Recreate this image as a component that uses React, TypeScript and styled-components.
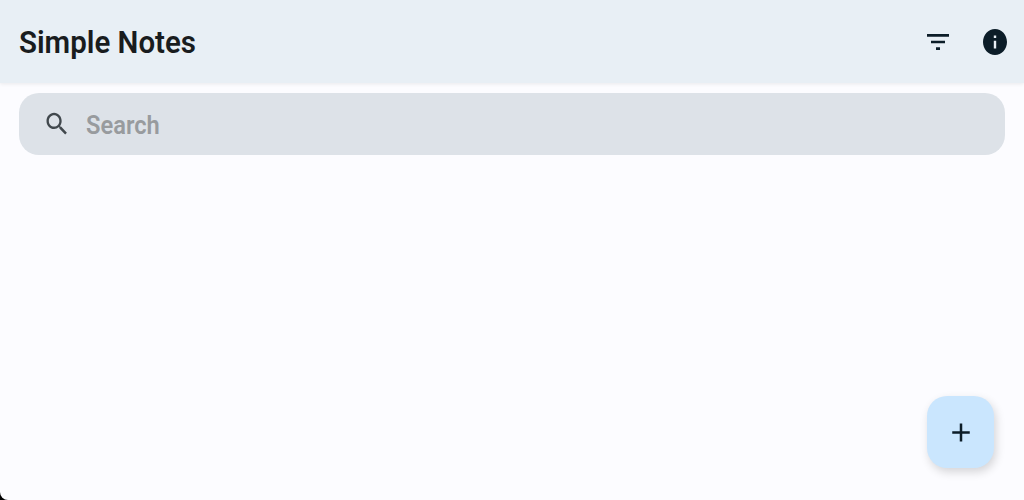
import React from 'react';
import styled, { createGlobalStyle } from 'styled-components';

const GlobalStyle = createGlobalStyle`
  html, body {
    margin: 0;
    padding: 0;
    height: 100%;
    background: #000;
    overflow: hidden;
  }
  #root {
    height: 100%;
  }
`;

const Screen = styled.div`
  position: relative;
  width: 1024px;
  height: 500px;
  background: #fcfcff;
  border-radius: 0 0 0 8px;
  overflow: hidden;
  font-family: Roboto, "Liberation Sans", sans-serif;
  display: flex;
  flex-direction: column;
`;

const Header = styled.header`
  height: 83px;
  flex: none;
  background: #e8eff5;
  box-shadow: 0 1px 4px rgba(0, 0, 0, 0.08);
  display: flex;
  align-items: center;
  padding: 0 17px 0 19px;
`;

const Title = styled.h1`
  flex: 1;
  margin: 2px 0 0;
  font-size: 31px;
  font-weight: 600;
  color: #191c1e;
  transform: scaleX(0.95);
  transform-origin: left center;
`;

const HeaderActions = styled.div`
  display: flex;
  align-items: center;
  gap: 33px;
`;

const IconButton = styled.button`
  width: 24px;
  padding: 0;
  border: none;
  background: transparent;
  color: #0c1d28;
  display: flex;
  align-items: center;
  justify-content: center;
`;

const SearchBar = styled.div`
  height: 62px;
  margin: 10px 19px 0;
  padding-left: 24px;
  border-radius: 20px;
  background: #dde2e8;
  display: flex;
  align-items: center;
  gap: 15px;
  color: #41484d;
`;

const SearchInput = styled.input`
  flex: 1;
  border: none;
  outline: none;
  background: transparent;
  font-family: inherit;
  font-size: 26px;
  font-weight: 600;
  padding: 2px 0 0;
  transform: scaleX(0.91);
  transform-origin: left center;

  &::placeholder {
    color: #989b9e;
    opacity: 1;
  }
`;

const Fab = styled.button`
  position: absolute;
  right: 30px;
  bottom: 32px;
  width: 67px;
  height: 72px;
  padding: 0;
  border: none;
  border-radius: 20px;
  background: #cae6fe;
  color: #0c1d28;
  box-shadow: 2px 4px 10px rgba(0, 0, 0, 0.16);
  display: flex;
  align-items: center;
  justify-content: center;
`;

const FilterIcon = () => (
  <svg width="24" height="32" viewBox="0 0 24 24" preserveAspectRatio="none" fill="currentColor">
    <path d="M10 18h4v-2h-4v2zM1 6v2h22V6H1zm4 7h14v-2H5v2z" />
  </svg>
);

const InfoIcon = () => (
  <svg width="24" height="26" viewBox="2 2 20 20" preserveAspectRatio="none" fill="currentColor">
    <path d="M12 2C6.48 2 2 6.48 2 12s4.48 10 10 10 10-4.48 10-10S17.52 2 12 2zm1 15h-2v-6h2v6zm0-8h-2V7h2v2z" />
  </svg>
);

const SearchIcon = () => (
  <svg width="28" height="30" viewBox="0 0 24 24" preserveAspectRatio="none" fill="currentColor">
    <path d="M15.5 14h-.79l-.28-.27C15.41 12.59 16 11.11 16 9.5 16 5.91 13.09 3 9.5 3S3 5.91 3 9.5 5.91 16 9.5 16c1.61 0 3.09-.59 4.23-1.57l.27.28v.79l5 4.99L20.49 19l-4.99-5zm-6 0C7.01 14 5 11.99 5 9.5S7.01 5 9.5 5 14 7.01 14 9.5 11.99 14 9.5 14z" />
  </svg>
);

const PlusIcon = () => (
  <svg width="30" height="31" viewBox="0 0 24 24" preserveAspectRatio="none" fill="currentColor">
    <path d="M19 13h-6v6h-2v-6H5v-2h6V5h2v6h6v2z" />
  </svg>
);

const App: React.FC = () => {
  return (
    <Screen>
      <GlobalStyle />
      <Header>
        <Title>Simple Notes</Title>
        <HeaderActions>
          <IconButton aria-label="Filter">
            <FilterIcon />
          </IconButton>
          <IconButton aria-label="Info">
            <InfoIcon />
          </IconButton>
        </HeaderActions>
      </Header>
      <SearchBar>
        <SearchIcon />
        <SearchInput placeholder="Search" />
      </SearchBar>
      <Fab aria-label="Add note">
        <PlusIcon />
      </Fab>
    </Screen>
  );
};

export default App;
